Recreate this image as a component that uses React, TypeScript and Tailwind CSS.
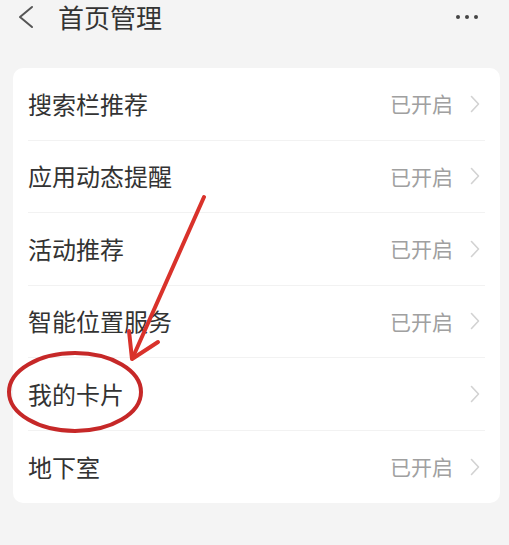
const rows = [
  { label: "搜索栏推荐", value: "已开启" },
  { label: "应用动态提醒", value: "已开启" },
  { label: "活动推荐", value: "已开启" },
  { label: "智能位置服务", value: "已开启" },
  { label: "我的卡片", value: "" },
  { label: "地下室", value: "已开启" },
];

const Chevron = () => (
  <svg width="10" height="18" viewBox="0 0 10 18" className="ml-[17px]">
    <polyline points="1.5,1.5 8.5,9 1.5,16.5" fill="none" stroke="#d2d2d2" strokeWidth="1.6" strokeLinecap="round" strokeLinejoin="round" />
  </svg>
);

const App = () => {
  return (
    <div
      className="relative w-[509px] h-[545px] overflow-hidden bg-[#f4f4f4]"
      style={{ fontFamily: '"Noto Sans CJK SC", "Noto Sans", sans-serif' }}
    >
      {/* header */}
      <div className="flex items-center h-[34px] pl-[18px] pr-[31px]">
        <svg width="16" height="24" viewBox="0 0 16 24">
          <polyline points="14,2 2,12 14,22" fill="none" stroke="#555" strokeWidth="2" strokeLinecap="round" strokeLinejoin="round" />
        </svg>
        <span className="ml-[24px] text-[26px] leading-[34px] text-[#333]">首页管理</span>
        <div className="ml-auto flex gap-[5px]">
          <span className="w-[4px] h-[4px] rounded-full bg-[#444]" />
          <span className="w-[4px] h-[4px] rounded-full bg-[#444]" />
          <span className="w-[4px] h-[4px] rounded-full bg-[#444]" />
        </div>
      </div>

      {/* list card */}
      <div className="mx-[13px] mt-[34px] w-[487px] rounded-[10px] bg-white">
        {rows.map((row, i) => (
          <div key={row.label} className="flex flex-col h-[72.5px]">
            <div className="flex flex-1 items-center pl-[15px] pr-[20px]">
              <span className="text-[24px] text-[#333]">{row.label}</span>
              <span className="ml-auto text-[21px] text-[#a0a0a0]">{row.value}</span>
              <Chevron />
            </div>
            {i < rows.length - 1 && <div className="mx-[15px] h-px bg-[#f2f2f2]" />}
          </div>
        ))}
      </div>

      {/* annotation */}
      <svg className="absolute inset-0 pointer-events-none" width="509" height="545" viewBox="0 0 509 545">
        <line x1="204" y1="197" x2="133" y2="357" stroke="#d9322b" strokeWidth="4" strokeLinecap="round" />
        <polyline points="129,331 132,359 158,342" fill="none" stroke="#d9322b" strokeWidth="4" strokeLinecap="round" strokeLinejoin="round" />
        <ellipse cx="75" cy="392" rx="66" ry="39" fill="none" stroke="#c62828" strokeWidth="4" />
      </svg>
    </div>
  );
};

export default App;
